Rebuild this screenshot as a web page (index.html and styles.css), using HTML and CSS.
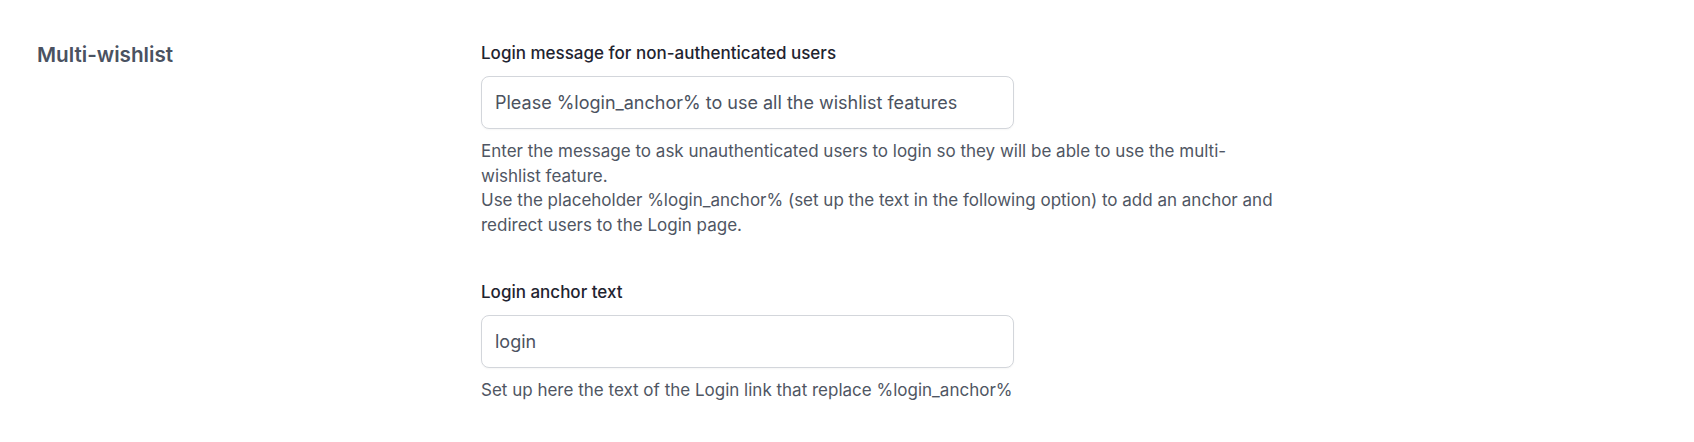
FILE: index.html
```html
<!DOCTYPE html>
<html lang="en">
<head>
	<title>Multi-wishlist</title>
	<meta charset="utf-8">
	<link rel="stylesheet" href="styles.css">
</head>
<body>

<!-- section -->
<div class="settings-section">

	<h2 class="section-title">Multi-wishlist</h2>

	<div class="section-fields">
		<div class="field">
			<label class="field-label" for="login_message">Login message for non-authenticated users</label>
			<input class="field-input" id="login_message" type="text" value="Please %login_anchor% to use all the wishlist features">
			<p class="field-desc">Enter the message to ask unauthenticated users to login so they will be able to use the multi-wishlist feature.<br>Use the placeholder %login_anchor% (set up the text in the following option) to add an anchor and redirect users to the Login page.</p>
		</div>

		<div class="field">
			<label class="field-label" for="login_anchor">Login anchor text</label>
			<input class="field-input" id="login_anchor" type="text" value="login">
			<p class="field-desc">Set up here the text of the Login link that replace %login_anchor%</p>
		</div>
	</div>

</div>
<!-- //section -->

</body>
</html>
```

FILE: styles.css
```css
*{padding: 0; margin: 0; box-sizing: border-box;}
body {background: #fff;font-family: Inter, "Noto Sans", sans-serif;color: #4b5563;}

.settings-section {display: flex;padding: 41px 0 0 37px;}
.section-title {width: 444px;flex: none;font-size: 20.7px;line-height: 28px;font-weight: 600;color: #4a5261;}

.section-fields {width: 800px;}
.field {margin-bottom: 43px;}
.field-label {display: block;font-size: 17px;line-height: 24px;font-weight: 500;color: #1f2430;margin-bottom: 11px;}

.field-input {
    display: block;
    width: 533px;
    height: 53px;
    padding: 0 13px;
    border: 1px solid #d3d6db;
    border-radius: 8px;
    box-shadow: 0 1px 2px rgba(0,0,0,0.04);
    font-family: inherit;
    font-size: 18px;
    color: #4b5260;
    background: #fff;
    outline: none;
}

.field-desc {margin-top: 10px;font-size: 17px;line-height: 24.5px;color: #4f5663;}
```
